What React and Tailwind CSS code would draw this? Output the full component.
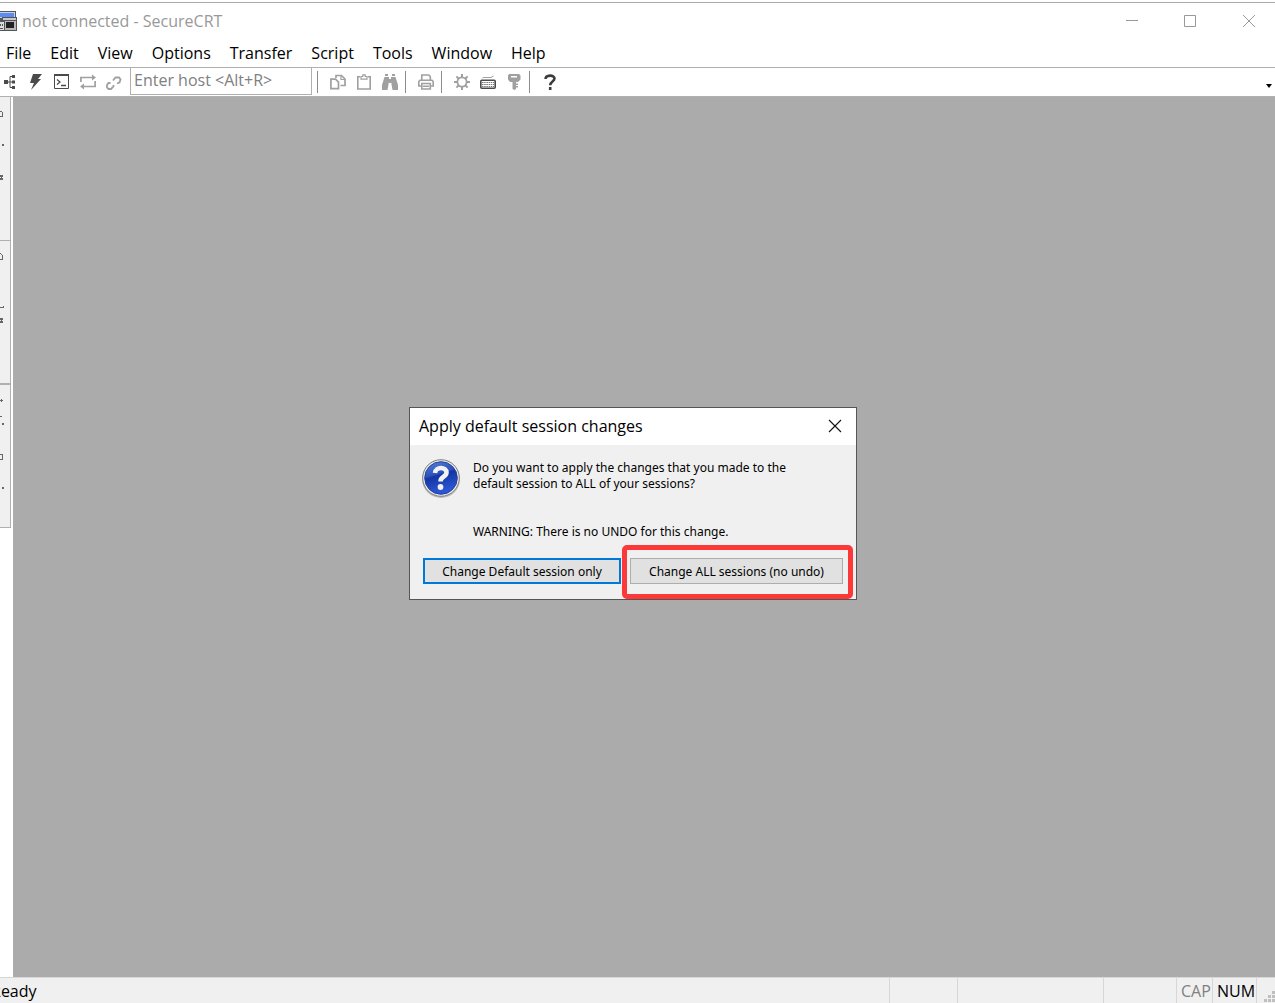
import { useState } from "react";

const MENUS = [
  "File",
  "Edit",
  "View",
  "Options",
  "Transfer",
  "Script",
  "Tools",
  "Window",
  "Help",
];

const ICONS = {
  tree: (
    <g fill="#4a4a4a">
      <path d="M2 6h4v4H2zM10 1h3v3h-3zM10 6.5h3v3h-3zM10 12h3v3h-3z" />
      <path d="M6 8h4M10 2.5H8v11h2" fill="none" stroke="#4a4a4a" />
    </g>
  ),
  bolt: <path d="M5 0h9l-4 5h3L3 16l3-7H2z" fill="#4a4a4a" />,
  terminal: (
    <g fill="none" stroke="#4a4a4a">
      <path d="M.5 1v13.5h14V1" />
      <path d="M0 1h15" strokeWidth="2" />
      <path d="M3 5.500l3 2.500-3 2.500M7 11.500h5" strokeWidth="1.300" />
    </g>
  ),
  reconnect: (
    <g fill="none" stroke="#a0a0a0" strokeWidth="1.700">
      <path d="M.9 8V3.500h12M15.100 7v5.500h-12" />
      <path d="M12 .5l4 3-4 3zM4 9.500l-4 3 4 3z" fill="#a0a0a0" stroke="none" />
    </g>
  ),
  unlink: (
    <g fill="none" stroke="#a0a0a0" strokeWidth="1.800">
      <path d="M7 6.500L9.500 3.500H13l1.500 2-1 3-2.500 1" />
      <path d="M4.500 9H2.500L1 11v2.500L2.500 15H5l2.500-2.500V11" />
    </g>
  ),
  copy: (
    <g fill="none" stroke="#a0a0a0" strokeWidth="1.700">
      <path d="M.9 5.200h4.600l3 3v6.500H.9z" />
      <path d="M6 4V1.500h5.500l3.500 3.500v6.500h-4.500" />
      <path d="M11 2v3.500h4" strokeWidth="1.200" />
    </g>
  ),
  paste: (
    <g fill="none" stroke="#a0a0a0" strokeWidth="1.600">
      <path d="M4 2.800H1.800v12.200h12.400V2.800H12" />
      <path d="M5 5.200V2.500h1.800V.8h2.400v1.700H11v2.700z" strokeWidth="1.200" />
    </g>
  ),
  find: (
    <g fill="#a0a0a0">
      <path d="M3 0h3v2H3zM10 0h3v2h-3zM2.500 3H7v4.500L5.500 16H0v-5zM13.500 3H9v4.500l1.500 8.500H16v-5zM7 5h2v4H7z" />
    </g>
  ),
  print: (
    <g fill="none" stroke="#a0a0a0" strokeWidth="1.600">
      <path d="M3.800 6V1h7l1.500 1.500V6M3.500 12H.8V7.500L2 6.200h12l1.200 1.300V12h-2.700" />
      <path d="M3.800 9.500h8.500V15H3.800zM5 12.200h6" />
    </g>
  ),
  gear: (
    <g fill="none" stroke="#a0a0a0">
      <circle cx="8" cy="8" r="4.600" strokeWidth="1.800" />
      <path
        d="M8 0v3.500M8 12.500V16M0 8h3.500M12.500 8H16M2.400 2.400l2.300 2.300M11.300 11.300l2.300 2.300M13.600 2.400l-2.300 2.300M4.700 11.300l-2.300 2.300"
        strokeWidth="2"
      />
    </g>
  ),
  keyboard: (
    <g fill="none" stroke="#4a4a4a">
      <path d="M2 4.500l1-1h8l2.500-1.500" stroke="#a0a0a0" />
      <rect x=".8" y="6.200" width="14.400" height="8" rx="1" strokeWidth="1.600" />
      <path d="M2 8.500h12M2 10.500h12M2 12.500h12" strokeDasharray="1.500 .7" stroke="#777" />
    </g>
  ),
  key: (
    <g fill="#a0a0a0">
      <path
        d="M3 0h10l1.500 1.500v4L12 8h-2v1.500h2V11h-2v1h2v1.500h-2V15l-1.500 1L6.500 15V8H4L2 5.500v-4zM5 2v1.500h6V2z"
        fillRule="evenodd"
      />
    </g>
  ),
  help: (
    <g fill="none" stroke="#3c3c3c" strokeWidth="2.600">
      <path d="M3.500 5C3.700 .8 12.500 .3 12.500 4.600 12.500 7.500 8.200 7.500 8.200 11.200" />
      <path d="M8.200 13v3" />
    </g>
  ),
};

function ToolButton({ name, label }) {
  return (
    <button aria-label={label} className="block h-4 w-4 shrink-0">
      <svg viewBox="0 0 16 16" className="h-4 w-4">
        {ICONS[name]}
      </svg>
    </button>
  );
}

function Separator() {
  return <div className="-ml-[3px] mr-[2px] h-[22px] w-px shrink-0 bg-[#8c8c8c]" />;
}

function AppIcon() {
  return (
    <svg viewBox="0 0 17 20" className="h-5 w-[17px] shrink-0">
      <path d="M0 0h16v15H0z" fill="#55565c" />
      <path d="M0 1h15v6H0z" fill="#c9d3e4" />
      <path d="M0 2h14v4H0z" fill="#5b8df0" />
      <path d="M2 6h15v14H0v-9h2z" fill="#55565c" />
      <path d="M3 7h13v2H3z" fill="#c9c9cc" />
      <path d="M5 10h11v9H5z" fill="#b8b8bc" />
      <path d="M6 11h8v6H6z" fill="#222" />
      <path d="M0 11h4v8H0z" fill="#dcdcdc" />
      <path d="M2 13h1v2H2zM0 13h1v2H0zM0 17h3v1H0z" fill="#55565c" />
    </svg>
  );
}

const DOCK_TABS = [
  {
    box: "h-[144px] border-b",
    d: "M0 14h2v1H0zM2 15h1v5H2zM0 19h2v1H0zM2 47h2v2H2zM0 78h3v2H0zM0 81h3v2H0zM1 80h1v1H1z",
  },
  {
    box: "h-[144px] border-b-2",
    d: "M0 12h1v1H0zM1 13h1v1H1zM2 14h1v5H2zM0 18h2v1H0zM0 66h4v1H0zM3 65h1v1H3zM0 77h3v2H0zM0 80h3v2H0zM1 79h1v1H1z",
  },
  {
    box: "h-[143px] border-b",
    d: "M0 15h3v1H0zM1 14h1v3H1zM0 31h2v1H0zM2 38h2v2H2zM0 69h3v1H0zM2 70h1v5H2zM0 74h2v1H0zM2 102h2v2H2z",
  },
];

function QuestionIcon() {
  return (
    <svg viewBox="0 0 40 40" className="h-10 w-10 shrink-0">
      <defs>
        <linearGradient id="ball" x1="0" y1="0" x2=".3" y2="1">
          <stop offset="0" stopColor="#5b83d8" />
          <stop offset=".45" stopColor="#2b50bc" />
          <stop offset=".5" stopColor="#1435a2" />
          <stop offset="1" stopColor="#2b57d6" />
        </linearGradient>
      </defs>
      <circle cx="20" cy="21" r="19" fill="#bdbdbd" />
      <circle cx="20" cy="20" r="18.300" fill="#e9e9e9" stroke="#808080" />
      <circle cx="20" cy="20" r="16.300" fill="url(#ball)" stroke="#2440a0" />
      <path
        d="M14 15c.5-6.500 11.500-6.500 11.500-.5 0 4.500-6 4-6 9"
        fill="none"
        stroke="#f2f2f2"
        strokeWidth="4.600"
      />
      <circle cx="19.500" cy="29" r="2.900" fill="#f2f2f2" />
    </svg>
  );
}

function SessionDialog({ onClose }) {
  return (
    <div
      role="dialog"
      aria-labelledby="dialog-title"
      className="absolute left-[409px] top-[310px] w-[448px] border border-[#555] bg-[#f0f0f0] text-black"
    >
      <div className="flex h-[37px] items-center justify-between bg-white pb-px pl-[9px] pr-[14px]">
        <h2 id="dialog-title" className="text-[16px] leading-5">
          Apply default session changes
        </h2>
        <button aria-label="Close" onClick={onClose} className="h-[14px] w-[14px]">
          <svg viewBox="0 0 14 14" className="h-[14px] w-[14px]">
            <path d="M1 1l12 12M13 1L1 13" stroke="#111" strokeWidth="1.100" />
          </svg>
        </button>
      </div>
      <div className="flex gap-3 px-[11px] pt-[13px] font-['Noto_Sans',sans-serif] text-[12px] leading-4">
        <QuestionIcon />
        <div className="pt-[2px]">
          <p>
            Do you want to apply the changes that you made to the
            <br />
            default session to ALL of your sessions?
          </p>
          <p className="mt-8">WARNING: There is no UNDO for this change.</p>
        </div>
      </div>
      <div className="mt-[5px] flex pl-[13px] pr-[3px] font-['Noto_Sans',sans-serif] text-[12px] leading-4">
        <button className="mt-[13px] h-[26px] w-[198px] border-2 border-[#0078d7] bg-[#e1e1e1] pt-px">
          Change Default session only
        </button>
        <div className="ml-px flex h-[54px] flex-1 items-start rounded-[5px] border-[5px] border-[#fd3838] px-[3px] pt-2">
          <button className="h-[26px] w-[213px] border border-[#adadad] bg-[#e1e1e1] pt-px">
            Change ALL sessions (no undo)
          </button>
        </div>
      </div>
    </div>
  );
}

export default function App() {
  const [host, setHost] = useState("");
  const [showDialog, setShowDialog] = useState(true);

  return (
    <div className="flex min-h-screen flex-col bg-white pt-[2px] font-['Open_Sans','Noto_Sans',sans-serif] text-[16px] leading-6 text-black">
      <header className="flex h-[37px] items-center justify-between border-t border-[#a9a9a9] pr-[19px]">
        <div className="flex items-center gap-[5px] text-[#999]">
          <AppIcon />
          <h1>not connected - SecureCRT</h1>
        </div>
        <div className="flex items-center gap-[45px] text-[#999]">
          <button aria-label="Minimize" className="h-[14px] w-[14px]">
            <svg viewBox="0 0 14 14" className="h-[14px] w-[14px]">
              <path d="M2 6.500h12" stroke="currentColor" />
            </svg>
          </button>
          <button aria-label="Maximize" className="h-[14px] w-[14px]">
            <svg viewBox="0 0 14 14" className="h-[14px] w-[14px]">
              <path d="M1.500 1.500h11v11h-11z" fill="none" stroke="currentColor" />
            </svg>
          </button>
          <button aria-label="Close window" className="h-[14px] w-[14px]">
            <svg viewBox="0 0 14 14" className="h-[14px] w-[14px]">
              <path d="M1 1l12 12M13 1L1 13" stroke="currentColor" />
            </svg>
          </button>
        </div>
      </header>

      <nav className="flex h-[28px] gap-[19px] px-[6px]">
        {MENUS.map((m) => (
          <button key={m} className="block">
            {m}
          </button>
        ))}
      </nav>

      <div className="flex h-[30px] items-center gap-[10px] border-y border-[#b0b0b0] pl-[2px] pr-[3px]">
        <ToolButton name="tree" label="Session manager" />
        <ToolButton name="bolt" label="Quick connect" />
        <ToolButton name="terminal" label="Connect in tab" />
        <ToolButton name="reconnect" label="Reconnect" />
        <ToolButton name="unlink" label="Disconnect" />
        <input
          aria-label="Host"
          value={host}
          onChange={(e) => setHost(e.target.value)}
          placeholder="Enter host <Alt+R>"
          className="-mx-[2px] h-[27px] w-[182px] self-start border border-t-0 border-[#b0b0b0] bg-white px-[3px] pb-[2px] outline-none placeholder:text-[#808080]"
        />
        <Separator />
        <ToolButton name="copy" label="Copy" />
        <ToolButton name="paste" label="Paste" />
        <ToolButton name="find" label="Find" />
        <Separator />
        <ToolButton name="print" label="Print" />
        <Separator />
        <ToolButton name="gear" label="Session options" />
        <ToolButton name="keyboard" label="Keymap editor" />
        <ToolButton name="key" label="Public key" />
        <Separator />
        <ToolButton name="help" label="Help" />
        <button aria-label="Toolbar options" className="ml-auto mt-2 block">
          <svg viewBox="0 0 6 4" className="h-1 w-[6px]">
            <path d="M0 0h6L3 4z" fill="#000" />
          </svg>
        </button>
      </div>

      <main className="relative flex flex-1">
        <aside className="w-[13px]">
          {DOCK_TABS.map((t) => (
            <div key={t.d} className={`w-[11px] border-r border-[#b0b0b0] bg-[#f0f0f0] ${t.box}`}>
              <svg viewBox="0 0 10 120" className="h-[120px] w-[10px]">
                <path d={t.d} fill="#666" />
              </svg>
            </div>
          ))}
        </aside>
        <section className="flex-1 bg-[#ababab]" />
        {showDialog && <SessionDialog onClose={() => setShowDialog(false)} />}
      </main>

      <footer className="flex h-[26px] overflow-hidden border-t border-[#d7d7d7] bg-[#f0f0f0]">
        <span className="-ml-[9px] flex-1 pt-px">Ready</span>
        <span className="w-[68px] border-l border-[#d7d7d7]" />
        <span className="w-[146px] border-l border-[#d7d7d7]" />
        <span className="w-[73px] border-l border-[#d7d7d7]" />
        <span className="w-9 border-l border-[#d7d7d7] pl-1 pt-px text-[#808080]">CAP</span>
        <span className="w-11 border-l border-[#d7d7d7] pl-1 pt-px">NUM</span>
        <span className="flex w-[19px] items-end justify-end border-l border-[#d7d7d7]">
          <svg viewBox="0 0 11 12" className="h-3 w-[11px]">
            <path
              d="M8 0h3v3H8zM4 4h3v3H4zM8 4h3v3H8zM0 8h3v3H0zM4 8h3v3H4zM8 8h3v3H8z"
              fill="#bfbfbf"
            />
          </svg>
        </span>
      </footer>
    </div>
  );
}
